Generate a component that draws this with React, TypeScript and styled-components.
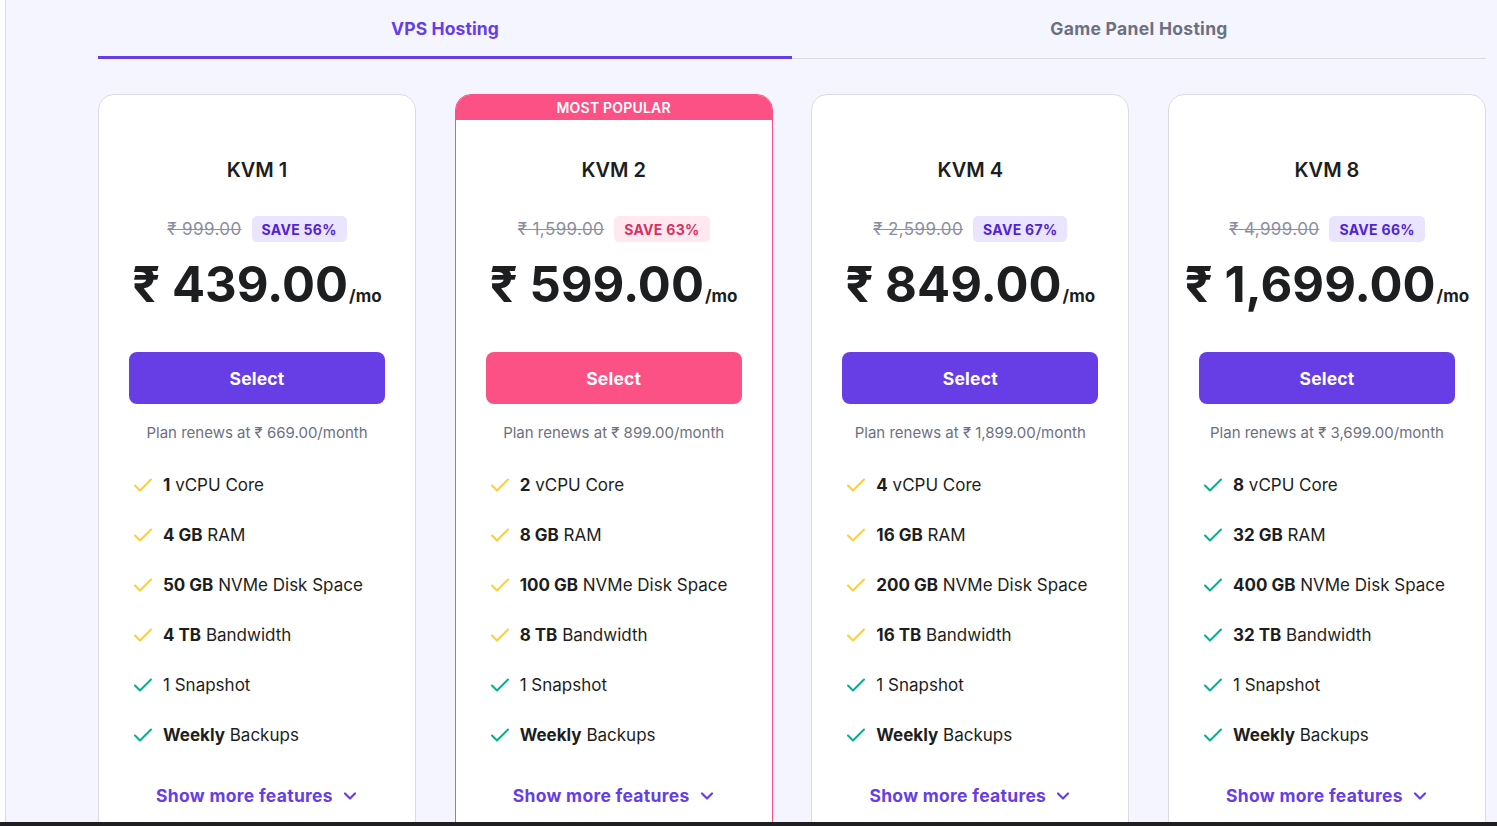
import React from "react";
import styled, { createGlobalStyle } from "styled-components";

type Feature = { bold?: string; text: string; tone: "gold" | "green" };

type Plan = {
  name: string;
  oldPrice: string;
  save: string;
  price: string;
  renew: string;
  popular?: boolean;
  features: Feature[];
};

const makeFeatures = (cpu: string, ram: string, disk: string, bw: string, allGreen: boolean): Feature[] => {
  const t = allGreen ? "green" : "gold";
  return [
    { bold: cpu, text: " vCPU Core", tone: t },
    { bold: ram, text: " RAM", tone: t },
    { bold: disk, text: " NVMe Disk Space", tone: t },
    { bold: bw, text: " Bandwidth", tone: t },
    { text: "1 Snapshot", tone: "green" },
    { bold: "Weekly", text: " Backups", tone: "green" },
  ];
};

const plans: Plan[] = [
  {
    name: "KVM 1",
    oldPrice: "₹ 999.00",
    save: "SAVE 56%",
    price: "₹ 439.00",
    renew: "Plan renews at ₹ 669.00/month",
    features: makeFeatures("1", "4 GB", "50 GB", "4 TB", false),
  },
  {
    name: "KVM 2",
    oldPrice: "₹ 1,599.00",
    save: "SAVE 63%",
    price: "₹ 599.00",
    renew: "Plan renews at ₹ 899.00/month",
    popular: true,
    features: makeFeatures("2", "8 GB", "100 GB", "8 TB", false),
  },
  {
    name: "KVM 4",
    oldPrice: "₹ 2,599.00",
    save: "SAVE 67%",
    price: "₹ 849.00",
    renew: "Plan renews at ₹ 1,899.00/month",
    features: makeFeatures("4", "16 GB", "200 GB", "16 TB", false),
  },
  {
    name: "KVM 8",
    oldPrice: "₹ 4,999.00",
    save: "SAVE 66%",
    price: "₹ 1,699.00",
    renew: "Plan renews at ₹ 3,699.00/month",
    features: makeFeatures("8", "32 GB", "400 GB", "32 TB", true),
  },
];

const PURPLE = "#673de6";
const PINK = "#fc5185";
const INK = "#1d1e20";

const GlobalStyle = createGlobalStyle`
  html, body {
    margin: 0;
    padding: 0;
    background: #ffffff;
    overflow: hidden;
  }
  body {
    font-family: Inter, "DejaVu Sans", sans-serif;
    color: ${INK};
  }
  * { box-sizing: border-box; }
`;

const Screen = styled.div`
  display: flex;
  flex-direction: column;
  height: 826px;
  width: 1497px;
`;

const Page = styled.main`
  flex: 1;
  overflow: hidden;
  margin-left: 5px;
  border-left: 1px solid #dadce0;
  background: #f4f5ff;
  padding: 0 11px 0 92px;
`;

const BottomBar = styled.div`
  height: 4px;
  background: #1f1f22;
`;

const Tabs = styled.div`
  display: grid;
  grid-template-columns: 1fr 1fr;
  height: 59px;
  border-bottom: 1px solid #dadce0;
`;

const Tab = styled.div<{ $active?: boolean }>`
  display: flex;
  align-items: center;
  justify-content: center;
  padding-top: 1px;
  font-size: 17.5px;
  font-weight: 700;
  letter-spacing: ${(p) => (p.$active ? "0.1px" : "0.3px")};
  color: ${(p) => (p.$active ? PURPLE : "#6d7081")};
  border-bottom: 3px solid ${(p) => (p.$active ? PURPLE : "transparent")};
  margin-bottom: -1px;
`;

const Grid = styled.div`
  display: grid;
  grid-template-columns: repeat(4, 318px);
  justify-content: space-between;
  margin-top: 35px;
`;

const Card = styled.div<{ $popular?: boolean }>`
  display: flex;
  flex-direction: column;
  align-items: center;
  height: 760px;
  background: #ffffff;
  border: 1px solid ${(p) => (p.$popular ? PINK : "#dadce0")};
  border-radius: 16px;
  overflow: hidden;
`;

const Ribbon = styled.div<{ $show?: boolean }>`
  align-self: stretch;
  height: 25px;
  display: flex;
  align-items: center;
  justify-content: center;
  background: ${(p) => (p.$show ? PINK : "transparent")};
  color: #ffffff;
  font-size: 14px;
  font-weight: 600;
  letter-spacing: 0.2px;
`;

const Body = styled.div`
  align-self: stretch;
  display: flex;
  flex-direction: column;
  align-items: center;
  padding: 38px 30px 0;
`;

const PlanName = styled.h3`
  margin: 0;
  font-size: 20px;
  line-height: 24px;
  font-weight: 600;
  color: ${INK};
`;

const DealRow = styled.div`
  display: flex;
  align-items: center;
  gap: 10px;
  margin-top: 34px;
  height: 26px;
`;

const OldPrice = styled.span`
  font-size: 17px;
  color: #8c8fa3;
  text-decoration: line-through;
  letter-spacing: 0.4px;
`;

const SaveBadge = styled.span<{ $popular?: boolean }>`
  display: inline-flex;
  align-items: center;
  height: 26px;
  padding: 0 10px;
  border-radius: 5px;
  font-size: 14px;
  font-weight: 700;
  letter-spacing: 0.3px;
  color: ${(p) => (p.$popular ? "#d63163" : "#5025d1")};
  background: ${(p) => (p.$popular ? "#ffe8ef" : "#ebe4ff")};
`;

const PriceRow = styled.div`
  display: flex;
  align-items: baseline;
  margin-top: 13px;
  height: 60px;
  white-space: nowrap;
`;

const Price = styled.span`
  font-size: 49px;
  font-weight: 700;
  letter-spacing: 0;
  color: ${INK};
`;

const Per = styled.span`
  font-size: 17px;
  font-weight: 700;
  color: ${INK};
  margin-left: 1px;
`;

const SelectButton = styled.button<{ $popular?: boolean }>`
  align-self: stretch;
  margin-top: 37px;
  height: 52px;
  border: none;
  border-radius: 8px;
  background: ${(p) => (p.$popular ? PINK : PURPLE)};
  color: #ffffff;
  font-family: inherit;
  font-size: 17.5px;
  font-weight: 700;
  letter-spacing: 0.2px;
  cursor: pointer;
`;

const Renew = styled.p`
  margin: 20px 0 0;
  font-size: 15px;
  line-height: 18px;
  color: #6d7081;
  letter-spacing: 0;
`;

const FeatureList = styled.ul`
  align-self: stretch;
  list-style: none;
  margin: 31px 0 0;
  padding: 0 0 0 4px;
  display: flex;
  flex-direction: column;
  gap: 26px;
`;

const FeatureItem = styled.li`
  display: flex;
  align-items: center;
  gap: 10px;
  height: 24px;
  font-size: 17px;
  color: ${INK};
  letter-spacing: 0;
  b {
    font-weight: 700;
  }
`;

const ShowMore = styled.a`
  display: flex;
  align-items: center;
  gap: 9px;
  margin-top: 38px;
  font-size: 17.5px;
  font-weight: 700;
  letter-spacing: 0.3px;
  color: ${PURPLE};
  text-decoration: none;
  cursor: pointer;
`;

const Check = ({ tone }: { tone: "gold" | "green" }) => (
  <svg width="20" height="20" viewBox="0 0 20 20" fill="none">
    <path
      d="M2 10.5l5 5L18 4.5"
      stroke={tone === "gold" ? "#ffcd35" : "#00b090"}
      strokeWidth="2"
      strokeLinecap="round"
      strokeLinejoin="round"
    />
  </svg>
);

const Chevron = () => (
  <svg width="16" height="16" viewBox="0 0 16 16" fill="none">
    <path d="M3 5.5l5 5 5-5" stroke={PURPLE} strokeWidth="2.2" strokeLinecap="round" strokeLinejoin="round" />
  </svg>
);

const PlanCard = ({ plan }: { plan: Plan }) => (
  <Card $popular={plan.popular}>
    <Ribbon $show={plan.popular}>{plan.popular ? "MOST POPULAR" : ""}</Ribbon>
    <Body>
      <PlanName>{plan.name}</PlanName>
      <DealRow>
        <OldPrice>{plan.oldPrice}</OldPrice>
        <SaveBadge $popular={plan.popular}>{plan.save}</SaveBadge>
      </DealRow>
      <PriceRow>
        <Price>{plan.price}</Price>
        <Per>/mo</Per>
      </PriceRow>
      <SelectButton $popular={plan.popular}>Select</SelectButton>
      <Renew>{plan.renew}</Renew>
      <FeatureList>
        {plan.features.map((f, i) => (
          <FeatureItem key={i}>
            <Check tone={f.tone} />
            <span>
              {f.bold && <b>{f.bold}</b>}
              {f.text}
            </span>
          </FeatureItem>
        ))}
      </FeatureList>
      <ShowMore>
        Show more features
        <Chevron />
      </ShowMore>
    </Body>
  </Card>
);

export default function App() {
  return (
    <>
      <GlobalStyle />
      <Screen>
        <Page>
          <Tabs>
            <Tab $active>VPS Hosting</Tab>
            <Tab>Game Panel Hosting</Tab>
          </Tabs>
          <Grid>
            {plans.map((p) => (
              <PlanCard key={p.name} plan={p} />
            ))}
          </Grid>
        </Page>
        <BottomBar />
      </Screen>
    </>
  );
}
